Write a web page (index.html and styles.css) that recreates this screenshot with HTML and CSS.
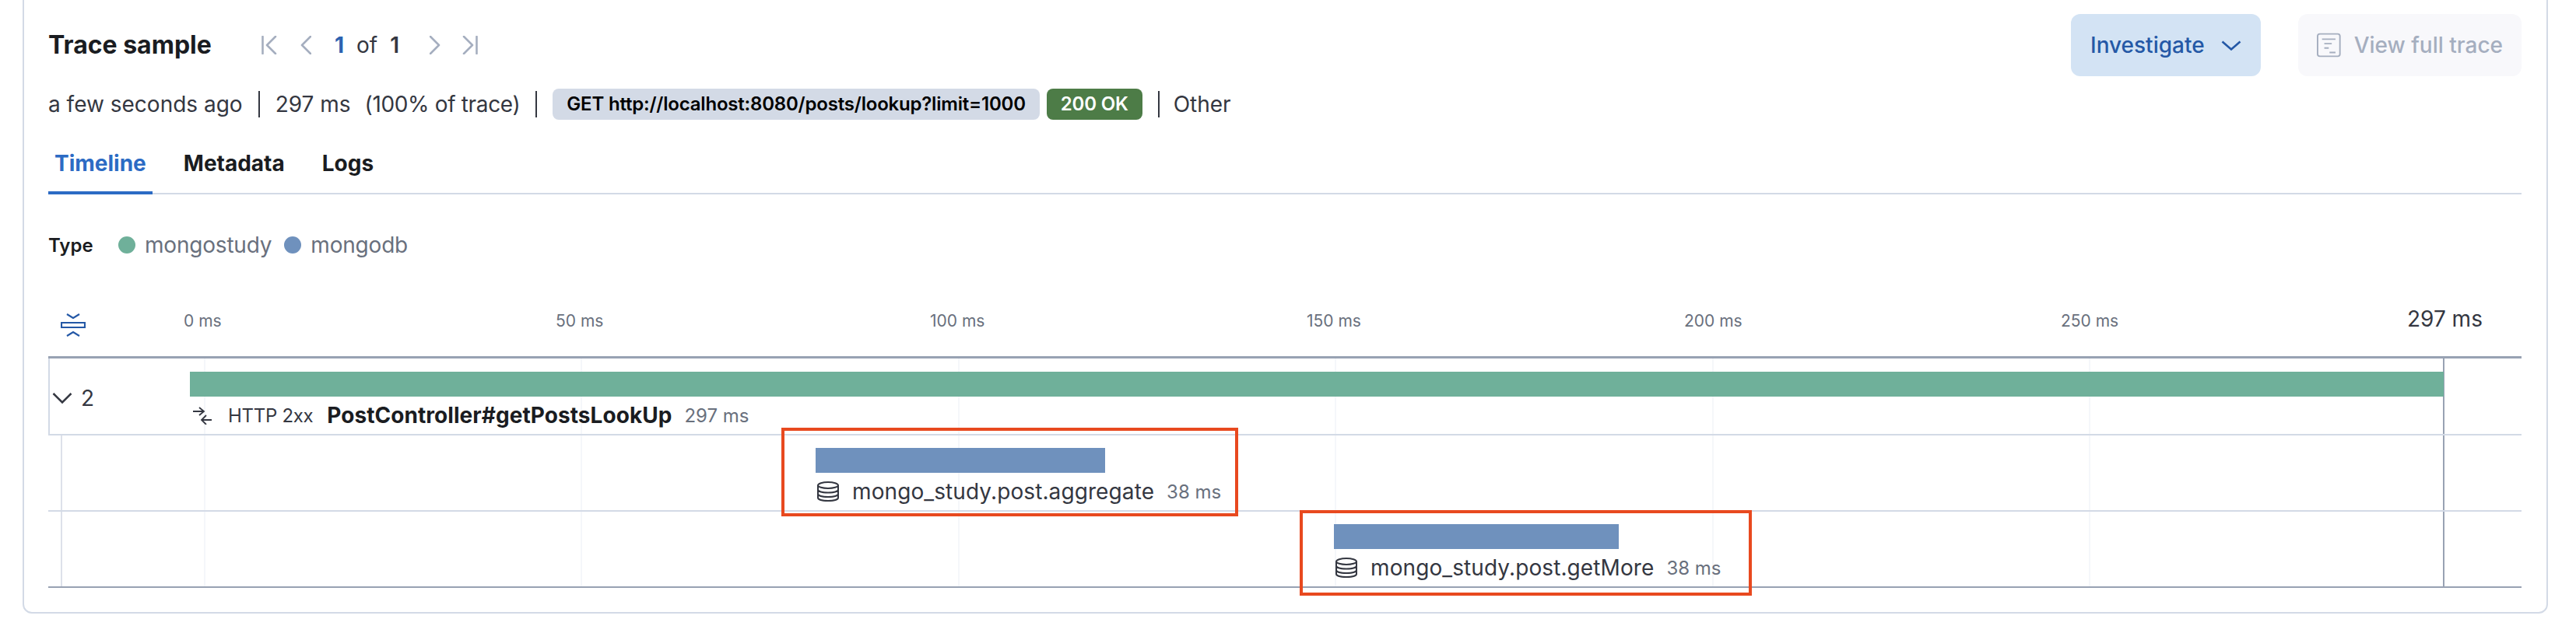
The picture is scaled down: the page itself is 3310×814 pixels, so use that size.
FILE: index.html
```html
<!DOCTYPE html>
<html lang="en">
<head>
<meta charset="utf-8">
<title>Trace sample</title>
<link rel="stylesheet" href="styles.css">
</head>
<body>
<main class="card">
  <header class="head">
    <h2 class="title">Trace sample</h2>
    <nav class="pager">
      <svg class="pg-icon pg-wide" viewBox="0 0 20 24"><path d="M1.5 1v22M18 1 7 12l11 11"/></svg>
      <svg class="pg-icon pg-narrow" viewBox="0 0 14 24"><path d="M13 1 2 12l11 11"/></svg>
      <span class="pg-text"><b class="pg-cur">1</b><span class="pg-of">of</span><span class="pg-tot">1</span></span>
      <svg class="pg-icon pg-narrow pg-next" viewBox="0 0 14 24"><path d="m1 1 11 11L1 23"/></svg>
      <svg class="pg-icon pg-wide" viewBox="0 0 20 24"><path d="M18.5 1v22M2 1l11 11L2 23"/></svg>
    </nav>
    <div class="actions">
      <button class="btn btn-inv">Investigate
        <svg class="chev" viewBox="0 0 26 13"><path d="M1.500 1.500 13 11.500 24.500 1.500"/></svg>
      </button>
      <button class="btn btn-view">
        <svg class="doc" viewBox="0 0 32 32"><rect x="1" y="1" width="30" height="30" rx="3"/><path d="M7 8h18M10 14h10M10 20h6M17 26h8"/></svg>
        View full trace
      </button>
    </div>
  </header>

  <div class="summary">
    <span>a few seconds ago</span><i class="sep"></i>
    <span class="dur">297 ms</span><span class="pct">(100% of trace)</span><i class="sep"></i>
    <span class="tag">GET http://localhost:8080/posts/lookup?limit=1000</span>
    <span class="tag tag-ok">200 OK</span><i class="sep sep-last"></i>
    <span>Other</span>
  </div>

  <div class="tabs">
    <a class="tab tab-on">Timeline</a>
    <a class="tab">Metadata</a>
    <a class="tab">Logs</a>
  </div>

  <div class="legend">
    <strong class="leg-title">Type</strong>
    <span class="leg-item"><i class="dot dot-g"></i>mongostudy</span>
    <span class="leg-item"><i class="dot dot-b"></i>mongodb</span>
  </div>

  <section class="timeline">
    <div class="axis">
      <svg class="collapse" viewBox="0 0 32 30"><path d="M8 1l8 5 8-5M1 12h30v6H1zM8 29l8-5 8 5"/></svg>
      <span class="tick" style="left:236px">0 ms</span>
      <span class="tick" style="left:714px">50 ms</span>
      <span class="tick" style="left:1195px">100 ms</span>
      <span class="tick" style="left:1679px">150 ms</span>
      <span class="tick" style="left:2164px">200 ms</span>
      <span class="tick" style="left:2648px">250 ms</span>
      <span class="tick tick-end" style="left:3093px">297 ms</span>
    </div>
    <div class="rows">
      <div class="grid" style="left:200px"></div>
      <div class="grid" style="left:684px"></div>
      <div class="grid" style="left:1169px"></div>
      <div class="grid" style="left:1653px"></div>
      <div class="grid" style="left:2138px"></div>
      <div class="grid" style="left:2622px"></div>
      <div class="endline"></div>
      <div class="rail"></div>

      <div class="row row-root">
        <div class="toggle">
          <svg class="toggle-ic" viewBox="0 0 26 26"><path d="M1.500 7 13 18.500 24.500 7"/></svg><span>2</span>
        </div>
        <div class="span" style="margin-left:180px">
          <div class="bar bar-g" style="width:2896px"></div>
          <div class="lbl">
            <svg class="http" viewBox="0 0 24 23"><path d="M0 6h14M8 1l6 5-6 5M24 17H11M17 11l-6 6 6 6"/></svg>
            <span class="lbl-type">HTTP 2xx</span>
            <strong class="lbl-name">PostController#getPostsLookUp</strong>
            <span class="lbl-ms">297 ms</span>
          </div>
        </div>
      </div>

      <div class="row">
        <div class="span" style="margin-left:986px">
          <div class="bar bar-b" style="width:372px"></div>
          <div class="lbl">
            <svg class="db" viewBox="0 0 30 26"><ellipse cx="15" cy="5" rx="13" ry="4"/><path d="M2 5v16c0 2.500 6 4 13 4s13-1.500 13-4V5M2 10.500c0 2.500 6 4 13 4s13-1.500 13-4M2 16c0 2.500 6 4 13 4s13-1.500 13-4"/></svg>
            <span class="lbl-span">mongo_study.post.aggregate</span>
            <span class="lbl-ms">38 ms</span>
          </div>
        </div>
      </div>

      <div class="row row-last">
        <div class="span" style="margin-left:1652px">
          <div class="bar bar-b" style="width:366px"></div>
          <div class="lbl">
            <svg class="db" viewBox="0 0 30 26"><ellipse cx="15" cy="5" rx="13" ry="4"/><path d="M2 5v16c0 2.500 6 4 13 4s13-1.500 13-4V5M2 10.500c0 2.500 6 4 13 4s13-1.500 13-4M2 16c0 2.500 6 4 13 4s13-1.500 13-4"/></svg>
            <span class="lbl-span">mongo_study.post.getMore</span>
            <span class="lbl-ms">38 ms</span>
          </div>
        </div>
      </div>

      <div class="mark mark-1"></div>
      <div class="mark mark-2"></div>
    </div>
  </section>
</main>
</body>
</html>
```
FILE: styles.css
```css
* { box-sizing: border-box; }
html, body { margin: 0; padding: 0; background: #fff; }
body { font-family: Inter, "Liberation Sans", sans-serif; color: #343741; height: 814px; overflow: hidden; }
.card { margin: -20px 0 0 29px; width: 3245px; height: 809px; border: 2px solid #d3dae6; border-radius: 12px; padding: 36px 32px 0 31px; }
.head { display: flex; align-items: center; height: 80px; }
.title { margin: 0; font-size: 32px; font-weight: 700; color: #1a1c21; line-height: 40px; width: 274px; }
.pager { display: flex; align-items: center; }
.pg-icon { height: 24px; fill: none; stroke: #a5aebf; stroke-width: 2.6; stroke-linecap: round; stroke-linejoin: round; }
.pg-wide { width: 20px; }
.pg-narrow { width: 14px; margin: 0 30px; }
.pg-next { margin: 0 28px 0 39px; }
.pg-text { display: flex; font-size: 28px; gap: 16px; }
.pg-cur { color: #2c62b0; font-weight: 700; }
.pg-tot { color: #343741; font-weight: 600; }
.actions { margin-left: auto; display: flex; gap: 48px; }
.btn { height: 80px; border: 0; border-radius: 12px; font: 500 28px Inter, sans-serif; display: flex; align-items: center; white-space: nowrap; }
.btn-inv { width: 244px; background: #d3e3f4; color: #2458a6; padding: 0 25px; gap: 21px; }
.chev { width: 26px; height: 13px; fill: none; stroke: #2458a6; stroke-width: 2.600; }
.btn-view { width: 287px; background: #f8f8fb; color: #a5aebf; padding: 0 24px; gap: 17px; }
.doc { width: 32px; height: 32px; fill: none; stroke: #a5aebf; stroke-width: 2; }
.summary { display: flex; align-items: center; height: 40px; margin-top: 16px; font-size: 28px; }
.sep { width: 2px; height: 34px; background: #343741; margin: 0 20px; }
.sep-last { margin-right: 18px; }
.pct { margin-left: 18px; letter-spacing: -.35px; }
.tag { height: 40px; border-radius: 8px; background: #d3dae6; color: #000; font-size: 24px; font-weight: 600; line-height: 40px; padding: 0 18px; white-space: nowrap; letter-spacing: -.2px; }
.tag-ok { background: #4d7c47; color: #fff; margin-left: 9px; }
.tabs { display: flex; margin-top: 16px; height: 80px; border-bottom: 2px solid #d3dae6; gap: 32px; }
.tab { font-size: 28px; font-weight: 700; color: #1a1c21; padding: 0 8px; line-height: 80px; height: 80px; }
.tab-on { color: #2c6bc4; border-bottom: 4px solid #2c6bc4; }
.legend { display: flex; align-items: center; margin-top: 45px; height: 40px; font-size: 28px; color: #69707d; gap: 16px; letter-spacing: -.2px; }
.leg-title { font-size: 24px; font-weight: 600; color: #1a1c21; width: 74px; letter-spacing: 0; }
.leg-item { display: flex; align-items: center; gap: 12px; }
.dot { width: 22px; height: 22px; border-radius: 50%; }
.dot-g { background: #6fb09a; }
.dot-b { background: #6f91bd; }
.axis { position: relative; height: 123px; }
.collapse { position: absolute; left: 16px; top: 68px; width: 32px; height: 30px; fill: none; stroke: #2458a6; stroke-width: 2.2; }
.tick { position: absolute; top: 65px; font-size: 21px; color: #69707d; line-height: 26px; transform: translateX(-62px); white-space: nowrap; }
.tick-end { font-size: 28px; color: #343741; top: 58px; line-height: 34px; }
.rows { position: relative; width: 3178px; height: 298px; border-top: 3px solid #98a2b3; border-bottom: 2px solid #98a2b3; }
.grid { position: absolute; top: 0; bottom: 0; width: 2px; background: #f5f7fa; }
.endline { position: absolute; left: 3077px; top: 0; bottom: 0; width: 2px; background: #98a2b3; }
.rail { position: absolute; left: 16px; top: 99px; bottom: 0; width: 2px; background: #dde1ea; }
.row { position: relative; height: 98px; border-bottom: 2px solid #d3dae6; padding-top: 16px; }
.row-root { display: flex; align-items: flex-start; height: 99px; padding-top: 17px; border-left: 2px solid #d3dae6; }
.row-last { border-bottom: 0; height: 96px; }
.toggle { position: absolute; left: 3px; top: 34px; display: flex; align-items: center; gap: 11px; font-size: 28px; line-height: 34px; color: #343741; }
.toggle-ic { width: 26px; height: 26px; fill: none; stroke: #343741; stroke-width: 2.500; }
.span { position: relative; }
.bar { height: 32px; }
.bar-g { background: #6fb09a; }
.bar-b { background: #6f91bd; }
.lbl { display: flex; align-items: center; height: 34px; margin-top: 7px; white-space: nowrap; font-size: 28px; }
.http { width: 24px; height: 23px; fill: none; stroke: #343741; stroke-width: 1.800; margin: 0 21px 0 4px; }
.db { width: 30px; height: 26px; fill: none; stroke: #343741; stroke-width: 2; margin: 0 16px 0 1px; }
.lbl-type { font-size: 24px; margin-right: 18px; letter-spacing: -.3px; }
.lbl-name { font-weight: 700; color: #1a1c21; letter-spacing: .05px; }
.lbl-ms { font-size: 24px; color: #69707d; margin-left: 16px; }
.lbl-span { color: #343741; letter-spacing: .1px; }
.mark { position: absolute; border: 4px solid #e8491f; pointer-events: none; }
.mark-1 { left: 942px; top: 89px; width: 587px; height: 114px; }
.mark-2 { left: 1608px; top: 195px; width: 581px; height: 110px; }
```
